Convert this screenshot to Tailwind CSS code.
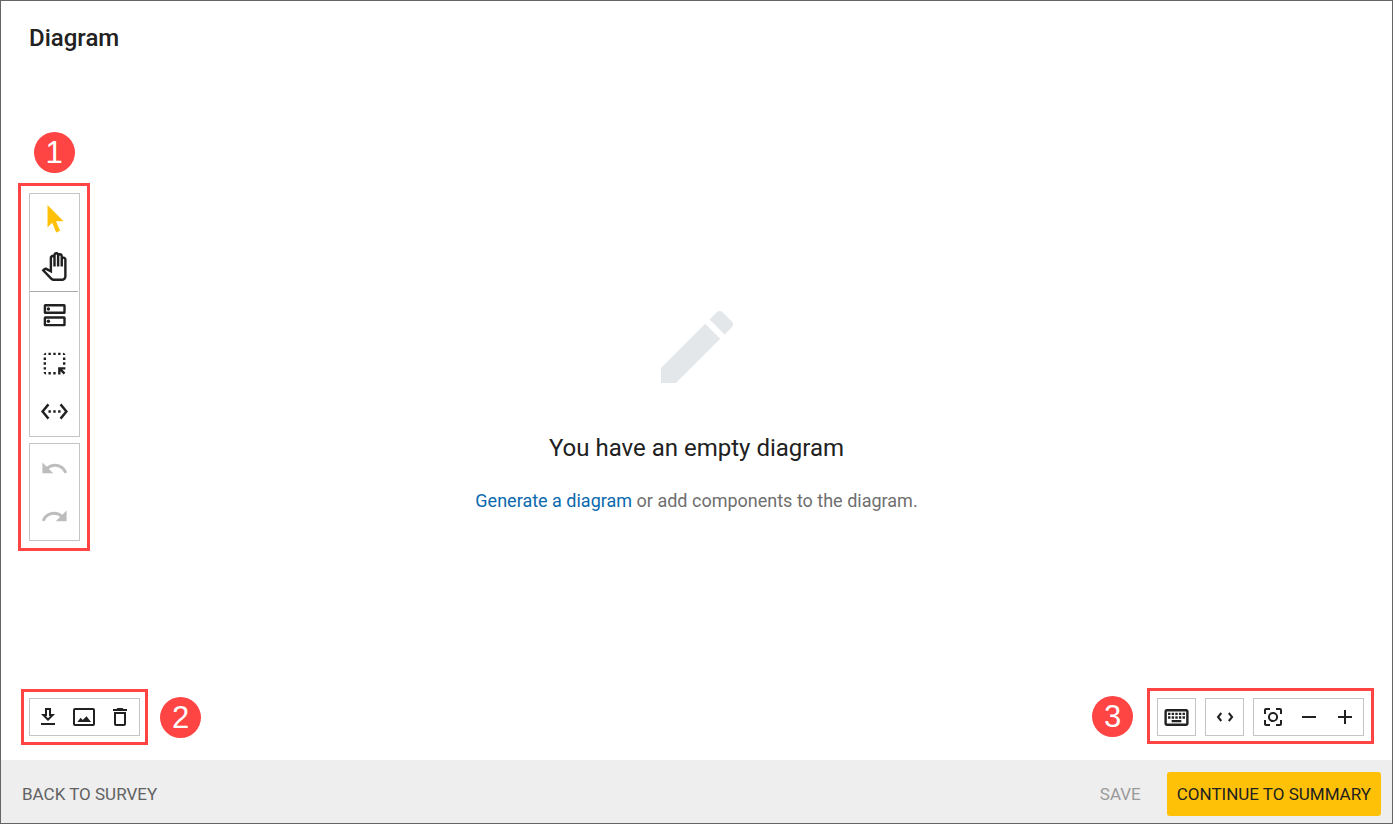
<!DOCTYPE html>
<html lang="en">
<head>
<meta charset="utf-8">
<meta name="viewport" content="width=device-width, initial-scale=1">
<title>Diagram</title>
<script src="https://cdn.jsdelivr.net/npm/@tailwindcss/browser@4"></script>
</head>
<body class="min-h-screen flex flex-col border border-[#656466] bg-white font-['Roboto','Liberation_Sans',sans-serif] text-[#212121]">
  <header class="px-7 pt-[21px]">
    <h1 class="text-2xl leading-8 font-medium">Diagram</h1>
  </header>

  <main class="flex-1 flex flex-col">
    <div class="flex-1 flex items-stretch">
      <aside class="w-[89px] pl-[17px] pt-[78px] flex flex-col items-center gap-[10px]">
        <span class="size-[41px] rounded-full bg-[#ff4444] text-white font-['Liberation_Sans',sans-serif] text-[31px] leading-none flex items-center justify-center">1</span>
        <div class="w-[72px] border-3 border-[#ff4444] pl-2 pr-[7px] py-[7px] flex flex-col gap-[6px]">
          <div class="border border-[#c4c4c4] pt-px flex flex-col" role="toolbar" aria-label="Drawing tools">
            <button type="button" aria-label="Select" class="h-12 pb-px flex items-center justify-center text-[#ffc107]">
              <svg class="size-[29px]" viewBox="0 0 29 29" fill="currentColor"><path d="M7.500 1v22.500l4.700-4.700 4 9.700 3.900-1.700-4.100-9.500h7.500z"/></svg>
            </button>
            <button type="button" aria-label="Pan" class="h-12 pb-px flex items-center justify-center">
              <svg class="size-[29px]" viewBox="0 0 24 24" fill="currentColor"><path d="M18 24h-6.550c-1.080 0-2.140-.45-2.890-1.230l-7.300-7.610 2.070-1.830c.62-.55 1.530-.66 2.260-.27L8 14.340V4.790c0-1.380 1.120-2.500 2.500-2.500.17 0 .34.02.51.05.09-1.300 1.170-2.330 2.490-2.330.86 0 1.610.43 2.060 1.090.29-.12.61-.18.94-.18 1.380 0 2.500 1.120 2.500 2.500v.28c.16-.03.33-.05.5-.05 1.380 0 2.500 1.120 2.500 2.500V20c0 2.210-1.790 4-4 4zM4.140 15.280l5.860 6.100c.38.39.9.62 1.440.62H18c1.100 0 2-.9 2-2V6.150c0-.28-.22-.5-.5-.5s-.5.22-.5.5V12h-2V3.420c0-.28-.22-.5-.5-.5s-.5.22-.5.5V12h-2V2.510c0-.28-.22-.5-.5-.5s-.5.22-.5.5V12h-2V4.790c0-.28-.22-.5-.5-.5s-.5.23-.5.5v12.870l-5.350-2.830-.51.45z"/></svg>
            </button>
            <hr class="border-t border-[#ababab] mr-px">
            <button type="button" aria-label="Add component" class="h-12 pb-px flex items-center justify-center">
              <svg class="size-[29px]" viewBox="0 0 29 29" fill="none" stroke="currentColor" stroke-width="2.4"><rect x="4.900" y="4.200" width="19.600" height="7.600" rx=".4"/><rect x="4.900" y="16.500" width="19.600" height="7.600" rx=".4"/><circle cx="8.400" cy="8" r="1.700" fill="currentColor" stroke="none"/><circle cx="8.400" cy="20.300" r="1.700" fill="currentColor" stroke="none"/></svg>
            </button>
            <button type="button" aria-label="Add boundary" class="h-12 pb-px flex items-center justify-center">
              <svg class="size-[29px]" viewBox="0 0 24 24" fill="currentColor"><path d="M17 5h-2V3h2v2zm-2 16h2v-2.590L19.590 21 21 19.590 18.410 17H21v-2h-6v6zm4-12h2V7h-2v2zm0 4h2v-2h-2v2zm-8 8h2v-2h-2v2zM7 5h2V3H7v2zM3 17h2v-2H3v2zm2 4v-2H3c0 1.100.9 2 2 2zM19 3v2h2c0-1.100-.9-2-2-2zm-8 2h2V3h-2v2zM3 9h2V7H3v2zm4 12h2v-2H7v2zm-4-8h2v-2H3v2zm0-8h2V3c-1.100 0-2 .9-2 2z"/></svg>
            </button>
            <button type="button" aria-label="Add connection" class="h-12 pb-px flex items-center justify-center">
              <svg class="size-[29px]" viewBox="0 0 24 24" fill="currentColor"><path d="M7.770 6.760L6.230 5.480.82 12l5.410 6.520 1.540-1.280L3.420 12l4.350-5.240zM7 13h2v-2H7v2zm10-2h-2v2h2v-2zm-6 2h2v-2h-2v2zm6.770-7.520l-1.540 1.280L20.580 12l-4.350 5.240 1.540 1.280L23.180 12l-5.410-6.520z"/></svg>
            </button>
          </div>
          <div class="border border-[#c4c4c4] flex flex-col text-[#bdbdbd]" role="toolbar" aria-label="History">
            <button type="button" disabled aria-label="Undo" class="h-12 flex items-center justify-center">
              <svg class="size-[29px]" viewBox="0 0 24 24" fill="currentColor"><path d="M12.500 8c-2.650 0-5.050.99-6.900 2.600L2 7v9h9l-3.620-3.620c1.390-1.160 3.160-1.880 5.120-1.880 3.540 0 6.550 2.310 7.600 5.500l2.370-.78C21.080 11.030 17.150 8 12.500 8z"/></svg>
            </button>
            <button type="button" disabled aria-label="Redo" class="h-12 flex items-center justify-center">
              <svg class="size-[29px]" viewBox="0 0 24 24" fill="currentColor"><path d="M18.400 10.600C16.550 8.990 14.150 8 11.500 8c-4.650 0-8.580 3.030-9.960 7.220L3.900 16c1.050-3.190 4.050-5.500 7.600-5.500 1.950 0 3.730.72 5.120 1.880L13 16h9V7l-3.600 3.600z"/></svg>
            </button>
          </div>
        </div>
      </aside>

      <section class="flex-1 pt-[245px] flex flex-col items-center text-center">
        <svg class="size-24 text-[#e4e7ea]" viewBox="0 0 24 24" fill="currentColor" aria-hidden="true"><path d="M3 17.250V21h3.750L17.810 9.940l-3.750-3.750L3 17.250zM20.710 7.040c.39-.39.39-1.020 0-1.410l-2.340-2.340c-.39-.39-1.020-.39-1.410 0l-1.830 1.830 3.750 3.750 1.830-1.830z"/></svg>
        <h2 class="mt-[37px] text-2xl leading-8">You have an empty diagram</h2>
        <p class="mt-[23px] text-lg leading-7 text-[#6f6f6f]"><a href="#" class="text-[#0b69ad]">Generate a diagram</a> or add components to the diagram.</p>
      </section>
      <div class="w-[89px]"></div>
    </div>

    <div class="flex items-end justify-between pl-5 pr-[18px] pb-[15px]">
      <div class="flex items-center gap-3">
        <div class="border-3 border-[#ff4444] px-[5px] py-[6px]">
          <div class="h-[38px] w-[111px] border border-[#c4c4c4] flex items-center" role="toolbar" aria-label="File">
            <button type="button" aria-label="Download" class="w-9 flex justify-center"><svg class="size-6" viewBox="0 0 24 24" fill="currentColor"><path d="M13 5v6h1.170L12 13.170 9.830 11H11V5h2m2-2H9v6H5l7 7 7-7h-4V3zm4 15H5v2h14v-2z"/></svg></button>
            <button type="button" aria-label="Export image" class="w-9 flex justify-center"><svg class="size-6" viewBox="0 0 24 24" fill="currentColor"><rect x="2" y="4" width="20" height="16" rx="1" fill="none" stroke="currentColor" stroke-width="2"/><path d="M5.300 17l3.400-4.200 2 2.200 3.800-3.700L19 17z"/></svg></button>
            <button type="button" aria-label="Delete" class="w-9 flex justify-center"><svg class="size-6" viewBox="0 0 24 24" fill="currentColor"><path d="M6 19c0 1.100.9 2 2 2h8c1.100 0 2-.9 2-2V7H6v12zM8 9h8v10H8V9zm7.500-5l-1-1h-5l-1 1H5v2h14V4h-3.500z"/></svg></button>
          </div>
        </div>
        <span class="size-[41px] rounded-full bg-[#ff4444] text-white font-['Liberation_Sans',sans-serif] text-[31px] leading-none flex items-center justify-center">2</span>
      </div>

      <div class="flex items-center gap-[14px] pb-px">
        <span class="size-[41px] rounded-full bg-[#ff4444] text-white font-['Liberation_Sans',sans-serif] text-[31px] leading-none flex items-center justify-center">3</span>
        <div class="border-3 border-[#ff4444] px-[7px] pt-[7px] pb-[5px] flex gap-[9px]" role="toolbar" aria-label="View">
          <button type="button" aria-label="Keyboard shortcuts" class="h-[38px] w-[39px] border border-[#c4c4c4] flex items-center justify-center"><svg class="size-[29px]" viewBox="0 0 24 24" fill="currentColor"><path d="M20 7v10H4V7h16m0-2H4c-1.100 0-1.990.9-1.990 2L2 17c0 1.100.9 2 2 2h16c1.100 0 2-.9 2-2V7c0-1.100-.9-2-2-2zm-9 3h2v2h-2zm0 3h2v2h-2zM8 8h2v2H8zm0 3h2v2H8zm-3 0h2v2H5zm0-3h2v2H5zm3 6h8v2H8zm6-3h2v2h-2zm0-3h2v2h-2zm3 3h2v2h-2zm0-3h2v2h-2z"/></svg></button>
          <button type="button" aria-label="Code view" class="h-[38px] w-[39px] border border-[#c4c4c4] flex items-center justify-center"><svg class="size-[18px]" viewBox="0 0 18 18" fill="none" stroke="currentColor" stroke-width="2"><path d="M5.300 5L2 9l3.300 4M12.800 5l3.300 4-3.300 4"/></svg></button>
          <div class="h-[38px] w-[111px] border border-[#c4c4c4] pl-px flex items-center">
            <button type="button" aria-label="Fit to screen" class="w-9 flex justify-center"><svg class="size-6" viewBox="0 0 24 24" fill="currentColor"><path d="M5 15H3v4c0 1.100.9 2 2 2h4v-2H5v-4zM5 5h4V3H5c-1.100 0-2 .9-2 2v4h2V5zm14-2h-4v2h4v4h2V5c0-1.100-.9-2-2-2zm0 16h-4v2h4c1.100 0 2-.9 2-2v-4h-2v4z"/><circle cx="12" cy="12" r="4.100" fill="none" stroke="currentColor" stroke-width="2"/></svg></button>
            <button type="button" aria-label="Zoom out" class="w-9 flex justify-center"><svg class="size-6" viewBox="0 0 24 24" fill="currentColor"><path d="M19 13H5v-2h14v2z"/></svg></button>
            <button type="button" aria-label="Zoom in" class="w-9 flex justify-center"><svg class="size-6" viewBox="0 0 24 24" fill="currentColor"><path d="M19 13h-6v6h-2v-6H5v-2h6V5h2v6h6v2z"/></svg></button>
          </div>
        </div>
      </div>
    </div>
  </main>

  <footer class="h-[63px] bg-[#eeeeee] pl-[21px] pr-[11px] flex items-center justify-between">
    <button type="button" class="pt-[5px] text-[17px] leading-6 text-[#616161]">BACK TO SURVEY</button>
    <div class="flex items-center gap-[26px] pt-1">
      <button type="button" disabled class="text-[17px] leading-6 text-[#9a9a9a]">SAVE</button>
      <button type="button" class="h-11 px-[10px] rounded-[3px] bg-[#ffc107] text-[17px] leading-6">CONTINUE TO SUMMARY</button>
    </div>
  </footer>
</body>
</html>
